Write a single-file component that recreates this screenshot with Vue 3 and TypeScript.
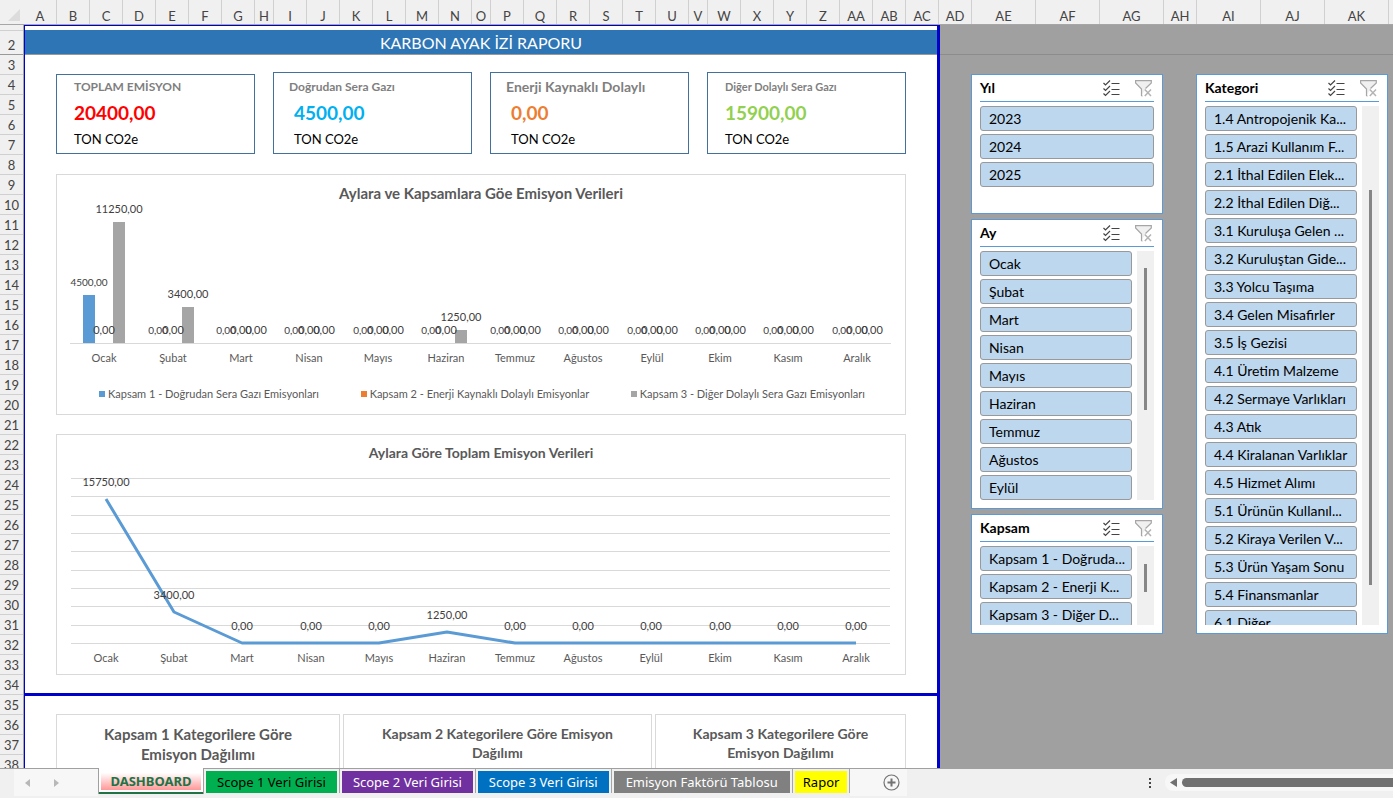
<script setup lang="ts">
interface Column { name: string; size: number }
interface Kpi { title: string; value: string; tone: string; shift: string }
interface Slicer { title: string; kind: string; items: string[]; scroll: boolean }
interface Tab { name: string; tone: string }

const narrow = ['H', 'O', 'V']
const wide = ['AE', 'AF', 'AG', 'AI', 'AJ', 'AK']
const names = [
  ...'ABCDEFGHIJKLMNOPQRSTUVWXYZ'.split(''),
  'AA', 'AB', 'AC', 'AD', 'AE', 'AF', 'AG', 'AH', 'AI', 'AJ', 'AK',
]
const columns: Column[] = names.map((name) => ({
  name,
  size: narrow.includes(name) ? 19 : wide.includes(name) ? 64 : 33,
}))
const columnTemplate = `24px ${columns.map((c) => `${c.size}fr`).join(' ')} 4fr`
const rows = Array.from({ length: 36 }, (_, i) => i + 3)

const kpis: Kpi[] = [
  { title: 'TOPLAM EMİSYON', value: '20400,00', tone: 'red', shift: 'short' },
  { title: 'Doğrudan Sera Gazı', value: '4500,00', tone: 'cyan', shift: 'inset' },
  { title: 'Enerji Kaynaklı Dolaylı', value: '0,00', tone: 'orange', shift: 'inset large' },
  { title: 'Diğer Dolaylı Sera Gazı', value: '15900,00', tone: 'green', shift: 'small' },
]

const months = ['Ocak', 'Şubat', 'Mart', 'Nisan', 'Mayıs', 'Haziran', 'Temmuz', 'Ağustos', 'Eylül', 'Ekim', 'Kasım', 'Aralık']
const scope3 = [11250, 3400, 0, 0, 0, 1250, 0, 0, 0, 0, 0, 0]
const series = [
  { name: 'Kapsam 1 - Doğrudan Sera Gazı Emisyonları', tone: 's1', values: [4500, 0, 0, 0, 0, 0, 0, 0, 0, 0, 0, 0] },
  { name: 'Kapsam 2 - Enerji Kaynaklı Dolaylı Emisyonlar', tone: 's2', values: months.map(() => 0) },
  { name: 'Kapsam 3 - Diğer Dolaylı Sera Gazı Emisyonları', tone: 's3', values: scope3 },
]
const format = (n: number): string => n.toFixed(2).replace('.', ',')

const axisY = 139
const barPitch = 821 / 12
const barHeight = (v: number): number => Math.floor((v * 121) / 11250)
const barCenter = (month: number, s: number): number => Math.round(13 + barPitch * (month + 0.5) + (s - 1) * 15)
const bars = series.flatMap((s, si) =>
  s.values.map((v, m) => ({
    key: `${s.tone}-${m}`,
    tone: s.tone,
    x: barCenter(m, si),
    h: barHeight(v),
    label: format(v),
  })),
)

const totals = [15750, 3400, 0, 0, 0, 1250, 0, 0, 0, 0, 0, 0]
const points = totals.map((v, m) => ({
  x: Math.round(15 + (818 / 12) * (m + 0.5)),
  y: Math.round(180 - (v * 165) / 18000),
  label: format(v),
  month: months[m],
}))
const linePath = points.map((p) => `${p.x},${p.y}`).join(' ')
const gridLines = Array.from({ length: 10 }, (_, i) => Math.round(15 + (i * 165) / 9))

const breakdowns = [1, 2, 3]

const leftSlicers: Slicer[] = [
  { title: 'Yıl', kind: 'year', items: ['2023', '2024', '2025'], scroll: false },
  { title: 'Ay', kind: 'month', items: months.slice(0, 9), scroll: true },
  { title: 'Kapsam', kind: 'scope', items: ['Kapsam 1 - Doğruda...', 'Kapsam 2 - Enerji K...', 'Kapsam 3 - Diğer D...'], scroll: true },
]
const rightSlicers: Slicer[] = [
  {
    title: 'Kategori',
    kind: 'category',
    scroll: true,
    items: [
      '1.4 Antropojenik Ka...', '1.5 Arazi Kullanım F...', '2.1 İthal Edilen Elek...', '2.2 İthal Edilen Diğ...',
      '3.1 Kuruluşa Gelen ...', '3.2 Kuruluştan Gide...', '3.3 Yolcu Taşıma', '3.4 Gelen Misafirler', '3.5 İş Gezisi',
      '4.1 Üretim Malzeme', '4.2 Sermaye Varlıkları', '4.3 Atık', '4.4 Kiralanan Varlıklar', '4.5 Hizmet Alımı',
      '5.1 Ürünün Kullanıl...', '5.2 Kiraya Verilen V...', '5.3 Ürün Yaşam Sonu', '5.4 Finansmanlar', '6.1 Diğer',
    ],
  },
]
const slicerStacks = [leftSlicers, rightSlicers]

const tabs: Tab[] = [
  { name: 'DASHBOARD', tone: 'active' },
  { name: 'Scope 1 Veri Girisi', tone: 'tab-green' },
  { name: 'Scope 2 Veri Girisi', tone: 'tab-purple' },
  { name: 'Scope 3 Veri Girisi', tone: 'tab-blue' },
  { name: 'Emisyon Faktörü Tablosu', tone: 'tab-gray' },
  { name: 'Rapor', tone: 'tab-yellow' },
]
</script>

<template>
  <div class="workbook">
    <div class="column-heads" :style="{ gridTemplateColumns: columnTemplate }">
      <button class="select-all" type="button" aria-label="Tümünü seç">
        <svg width="12" height="12" viewBox="0 0 12 12"><path d="M12 0V12H0Z" fill="#dcdcdc" /></svg>
      </button>
      <div v-for="c in columns" :key="c.name" class="column-head">{{ c.name }}</div>
    </div>

    <main class="sheet">
      <div class="row-heads">
        <div class="row-head first"></div>
        <div class="row-head second">2</div>
        <div v-for="r in rows" :key="r" class="row-head">{{ r }}</div>
      </div>

      <section class="report">
        <div class="frozen"><h1>KARBON AYAK İZİ RAPORU</h1></div>
        <div class="report-body">
          <div class="kpis">
            <article v-for="k in kpis" :key="k.title" class="kpi" :class="k.shift">
              <h2>{{ k.title }}</h2>
              <p class="kpi-value" :class="k.tone">{{ k.value }}</p>
              <p class="kpi-unit">TON CO2e</p>
            </article>
          </div>

          <figure class="chart by-scope">
            <h2>Aylara ve Kapsamlara Göe Emisyon Verileri</h2>
            <svg class="plot" viewBox="0 0 848 165">
              <path class="axis" :d="`M13 ${axisY}.5H834`" />
              <rect v-for="b in bars" :key="b.key" :class="b.tone" :x="b.x - 6" :y="axisY - b.h" width="12" :height="b.h" />
              <text v-for="b in bars" :key="b.key" class="value" :class="'label-' + b.tone" :x="b.x" :y="axisY - b.h - 9">{{ b.label }}</text>
              <text v-for="(m, i) in months" :key="m" class="month-name" :x="barCenter(i, 1)" y="158">{{ m }}</text>
            </svg>
            <figcaption class="legend">
              <span v-for="s in series" :key="s.tone" class="legend-item"><i class="swatch" :class="s.tone"></i>{{ s.name }}</span>
            </figcaption>
          </figure>

          <figure class="chart">
            <h2>Aylara Göre Toplam Emisyon Verileri</h2>
            <svg class="plot" viewBox="0 0 848 211">
              <path v-for="y in gridLines" :key="y" class="axis" :d="`M14 ${y}.5H833`" />
              <polyline class="trend" :points="linePath" />
              <text v-for="p in points" :key="p.month" class="value" :x="p.x" :y="p.y - 13">{{ p.label }}</text>
              <text v-for="p in points" :key="p.month" class="month-name" :x="p.x" y="199">{{ p.month }}</text>
            </svg>
          </figure>
        </div>
        <div class="report-tail">
          <article v-for="n in breakdowns" :key="n" class="breakdown">
            <h2>Kapsam {{ n }} Kategorilere Göre Emisyon Dağılımı</h2>
          </article>
        </div>
      </section>

      <aside class="side">
        <div class="frozen-side"></div>
        <div class="slicers">
          <div v-for="(stack, si) in slicerStacks" :key="si" class="stack">
            <section v-for="s in stack" :key="s.title" class="slicer" :class="s.kind">
              <header>
                <h3>{{ s.title }}</h3>
                <button type="button" class="tool" aria-label="Çoklu seçim">
                  <svg width="17" height="17" viewBox="0 0 17 17" fill="none" stroke="#444" stroke-width="1.2">
                    <path d="M.5 3 2.500 5 7 .500M.5 8.500 2.500 10.500 7 6M.5 13.500 2.500 15.500 7 11" />
                    <path d="M8.500 3.500H16.500M8.500 9.500H16.500M8.500 14.500H16.500" />
                  </svg>
                </button>
                <button type="button" class="tool" aria-label="Filtreyi temizle">
                  <svg width="17" height="17" viewBox="0 0 17 17" fill="none" stroke="#a6a6a6" stroke-width="1.2">
                    <path d="M6.500 16V9L.600 3V.600H16.300V3L10.500 8.500" fill="#f0f0f0" />
                    <path d="M6.500 16H7.500" />
                    <path d="M9.800 9.500 16 16M16 9.500 9.800 16" stroke="#b4b4b4" stroke-width="1.500" />
                  </svg>
                </button>
              </header>
              <div class="slicer-body">
                <div class="items">
                  <button v-for="item in s.items" :key="item" type="button" class="item">{{ item }}</button>
                </div>
                <div v-if="s.scroll" class="track"><div class="thumb"></div></div>
              </div>
            </section>
          </div>
        </div>
      </aside>
    </main>

    <footer class="tabbar">
      <div class="tab-nav">
        <button type="button" aria-label="Önceki"><svg width="5" height="8" viewBox="0 0 5 8"><path d="M5 0V8L0 4Z" fill="#b8b8b8" /></svg></button>
        <button type="button" aria-label="Sonraki"><svg width="5" height="8" viewBox="0 0 5 8"><path d="M0 0V8L5 4Z" fill="#b8b8b8" /></svg></button>
      </div>
      <nav class="tabs">
        <div v-for="t in tabs" :key="t.name" class="tab-slot" :class="{ current: t.tone === 'active' }">
          <button type="button" class="tab" :class="t.tone">{{ t.name }}</button>
        </div>
      </nav>
      <button type="button" class="add" aria-label="Yeni sayfa">
        <svg width="17" height="17" viewBox="0 0 17 17" fill="none" stroke="#737373">
          <circle cx="8.500" cy="8.500" r="7.500" stroke-width="1.200" />
          <path d="M4.500 8.500H12.500M8.500 4.500V12.500" stroke-width="2" />
        </svg>
      </button>
      <svg class="grip" width="4" height="12" viewBox="0 0 4 12"><path d="M1 1H3V3H1ZM1 5H3V7H1ZM1 9H3V11H1Z" fill="#444" /></svg>
      <div class="hscroll">
        <svg width="7" height="9" viewBox="0 0 7 9"><path d="M7 0V9L0 4.500Z" fill="#707070" /></svg>
        <div class="hthumb"></div>
      </div>
    </footer>
  </div>
</template>

<style>
body { margin: 0; }
</style>

<style scoped>
.workbook {
  display: flex;
  flex-direction: column;
  height: 100vh;
  overflow: hidden;
  background: #f0f0f0;
  color: #000;
  font-family: Lato, "Noto Sans", sans-serif;
  font-size: 14px;
}
h1, h2, h3, p, figure { margin: 0; }
button { margin: 0; padding: 0; border: 0; background: none; color: inherit; font: inherit; }
svg { display: block; }

.column-heads { display: grid; flex: none; height: 24px; border-bottom: 1px solid #a6a6a6; }
.select-all { display: flex; padding: 9px 4px 0 8px; }
.column-head {
  min-width: 0;
  padding-top: 6px;
  border-right: 1px solid #d0d0d0;
  color: #444;
  font-size: 13px;
  line-height: 20px;
  height: 18px;
  text-align: center;
  white-space: nowrap;
}

.sheet {
  display: grid;
  flex: 1;
  grid-template-columns: 24px 916fr 453fr;
  min-height: 0;
  overflow: hidden;
  background: #a0a0a0;
}
.row-heads { border-right: 1px solid #a6a6a6; background: #f0f0f0; }
.row-head {
  box-sizing: border-box;
  height: 20px;
  border-bottom: 1px solid #d0d0d0;
  color: #444;
  font-size: 13px;
  line-height: 21px;
  text-align: center;
}
.row-head.first { height: 6px; }
.row-head.second { height: 24px; padding-top: 4px; border-color: #999; }

.report {
  min-width: 0;
  border: solid #0000cd;
  border-width: 1px 3px 0 1px;
  background: #fff;
}
.frozen { height: 24px; padding-top: 4px; border-bottom: 1px solid #999; }
.frozen h1 {
  height: 24px;
  background: #2e75b6;
  color: #fff;
  font-size: 16px;
  font-weight: 400;
  line-height: 26px;
  text-align: center;
}
.report-body { padding: 17px 31px 18px; border-bottom: 3px solid #0000cd; }

.kpis { display: grid; grid-template-columns: repeat(4, 1fr); gap: 18px; align-items: end; }
.kpi {
  box-sizing: border-box;
  height: 82px;
  padding: 5px 0 0 17px;
  border: 1px solid #41719c;
  white-space: nowrap;
}
.kpi.short { height: 80px; padding-top: 3px; }
.kpi h2 { color: #7f7f7f; font-size: 12px; line-height: 18px; }
.kpi.large h2 { font-size: 14px; }
.kpi.small h2 { font-size: 11px; }
.kpi-value { font-size: 19px; font-weight: 700; line-height: 34px; }
.kpi-unit { font-size: 13px; line-height: 18px; }
.inset { padding-left: 15px; }
.inset .kpi-value, .inset .kpi-unit { padding-left: 5px; }
.red { color: #f00; }
.cyan { color: #00b0f0; }
.orange { color: #ed7d31; }
.green { color: #92d050; }

.chart { box-sizing: border-box; margin-top: 20px; border: 1px solid #d9d9d9; background: #fff; }
.chart + .chart { margin-top: 19px; }
.chart h2 { padding-top: 7px; color: #595959; font-size: 14px; line-height: 21px; text-align: center; }
.chart.by-scope h2 { padding-top: 8px; font-size: 15px; }
.plot { width: 100%; height: auto; overflow: visible; }
.plot text { text-anchor: middle; font-size: 11px; }
.axis { stroke: #d9d9d9; fill: none; }
.value { fill: #404040; }
.plot .label-s1 { font-size: 10px; }
.month-name { fill: #595959; }
.trend { fill: none; stroke: #5b9bd5; stroke-width: 3; stroke-linejoin: round; }
.s1 { fill: #5b9bd5; background: #5b9bd5; }
.s2 { fill: #ed7d31; background: #ed7d31; }
.s3 { fill: #a5a5a5; background: #a5a5a5; }
.plot .value { fill: #404040; background: none; }
.legend {
  display: flex;
  justify-content: space-between;
  padding: 15px 40px 10px 42px;
  color: #595959;
  font-size: 11px;
  line-height: 20px;
}
.legend-item { display: flex; align-items: center; gap: 3px; white-space: nowrap; }
.swatch { width: 6px; height: 6px; }

.report-tail { display: grid; grid-template-columns: 284fr 309fr 251fr; gap: 3px; padding: 18px 31px 0; }
.breakdown { height: 240px; padding: 9px 34px; border: 1px solid #d9d9d9; }
.breakdown h2 { color: #595959; font-size: 14px; line-height: 19px; text-align: center; }
.breakdown:first-child h2 { font-size: 15px; line-height: 20px; }

.side { min-width: 0; }
.frozen-side { height: 29px; border-bottom: 1px solid #8c8c8c; }
.slicers { display: grid; grid-template-columns: 1fr 1fr; gap: 33px; padding: 19px 5px 0 31px; }
.stack { display: flex; flex-direction: column; gap: 5px; min-width: 0; }
.slicer {
  display: flex;
  flex-direction: column;
  box-sizing: border-box;
  padding: 0 8px 8px;
  border: 1px solid #5b9bd5;
  background: #fff;
}
.year { height: 140px; }
.month { height: 290px; }
.scope { height: 120px; }
.category { height: 560px; }
.slicer header { display: flex; flex: none; align-items: center; height: 26px; border-bottom: 1px solid #5b9bd5; }
.slicer h3 { flex: 1; font-size: 14px; line-height: 20px; }
.tool { width: 17px; height: 17px; margin: 0 2px 0 13px; }
.slicer-body { display: flex; flex: 1; gap: 5px; min-height: 0; margin-top: 4px; }
.items { display: flex; flex: 1; flex-direction: column; gap: 3px; min-width: 0; overflow: hidden; }
.item {
  flex: none;
  height: 25px;
  padding: 0 0 0 8px;
  overflow: hidden;
  border: 1px solid #999;
  border-radius: 3px;
  background: #bdd7ee;
  line-height: 22px;
  text-align: left;
  white-space: nowrap;
}
.track { flex: none; width: 17px; background: #f0f0f0; }
.thumb { width: 3px; margin: 0 auto; background: #868686; }
.month .thumb { height: 142px; margin-top: 17px; }
.scope .thumb { height: 28px; margin-top: 18px; }
.category .thumb { height: 395px; margin-top: 84px; }

.tabbar {
  display: flex;
  flex: none;
  align-items: center;
  box-sizing: border-box;
  height: 30px;
  padding-bottom: 2px;
  border-top: 1px solid #a0a0a0;
  background: #f0f0f0;
  font-family: "Noto Sans", "Open Sans", sans-serif;
  font-size: 13px;
}
.tab-nav { display: flex; gap: 24px; width: 73px; height: 27px; margin-left: 14px; padding-left: 11px; background: #f7f7f7; }
.tabs { display: flex; align-items: flex-start; height: 27px; }
.tab-slot { display: flex; padding: 2px 2px 0; border-right: 1px solid #a6a6a6; }
.tab-slot.current { position: relative; margin-top: -1px; padding: 0; border: solid #a0a0a0; border-width: 0 1px; background: #fff; }
.tab { height: 22px; padding: 0 11px; line-height: 22px; white-space: nowrap; }
.tab.active {
  height: 26px;
  min-width: 104px;
  padding: 2px 10px 0;
  border-bottom: 2px solid #217346;
  background: linear-gradient(#fff 20%, #ff8c8c);
  box-shadow: inset 0 0 0 2px #fff;
  color: #217346;
  font-weight: 700;
}
.tab-green { background: #00b050; }
.tab-purple { background: #7030a0; color: #fff; }
.tab-blue { background: #0070c0; color: #fff; }
.tab-gray { padding: 0 12px; background: #808080; color: #fff; }
.tab-yellow { padding: 0 8px; background: #ff0; }
.add { display: flex; align-items: center; height: 27px; padding: 0 7px 0 33px; background: #f7f7f7; }
.grip { margin-left: auto; }
.hscroll { display: flex; align-items: center; gap: 5px; width: 223px; height: 17px; margin-left: 13px; padding-left: 5px; border-radius: 8px 0 0 8px; background: #f7f7f7; }
.hthumb { flex: 1; height: 9px; border-radius: 5px 0 0 5px; background: #707070; }
</style>
